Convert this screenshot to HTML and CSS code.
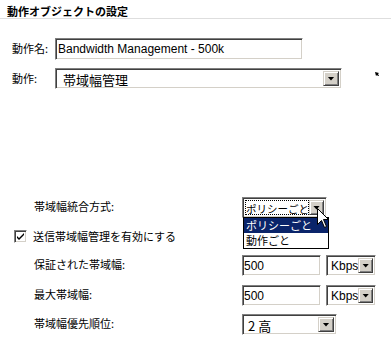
FILE: index.html
```html
<!DOCTYPE html>
<html lang="ja">
<head>
    <meta charset="UTF-8">
    <title>動作オブジェクトの設定</title>
    <link rel="stylesheet" href="styles.css">
</head>
<body>
    <h1 class="title">動作オブジェクトの設定</h1>

    <div class="general">
        <label class="lbl" for="actName">動作名:</label>
        <input type="text" id="actName" class="field name-field" value="Bandwidth Management - 500k">
        <span></span>

        <span class="lbl">動作:</span>
        <div class="combo action-combo">
            <span class="combo-text">帯域幅管理</span>
            <span class="drop"></span>
        </div>
        <svg class="mini-pointer" width="5" height="5" viewBox="0 0 5 5" aria-hidden="true">
            <path d="M0 0 L4 1 L3 2 L4 4 L3 4 L2 3 L1 4 Z" fill="#000"/>
        </svg>
    </div>

    <div class="bw">
        <div class="bw-row">
            <span class="bw-lbl">帯域幅統合方式:</span>
            <div class="combo mode-combo">
                <span class="combo-text focus-text">ポリシーごと</span>
                <span class="drop"></span>
                <ul class="combo-list">
                    <li class="selected">ポリシーごと</li>
                    <li>動作ごと</li>
                </ul>
                <!-- mouse cursor hovering over the drop button -->
                <svg class="cursor" width="12" height="20" viewBox="0 0 12 20" aria-hidden="true">
                    <path d="M0.5 0.5 L0.5 16.5 L4.5 12.5 L7.5 19.5 L9.5 18.5 L6.5 11.5 L11.5 11.5 Z" fill="#fff" stroke="#000" stroke-width="1"/>
                </svg>
            </div>
        </div>

        <div class="check-row">
            <span class="checkbox">
                <svg width="9" height="9" viewBox="0 0 9 9" aria-hidden="true">
                    <path d="M1 4 L3 6 L8 1 L8 3 L3 8 L1 6 Z" fill="#000"/>
                </svg>
            </span>
            <span class="check-lbl">送信帯域幅管理を有効にする</span>
        </div>

        <div class="bw-row">
            <span class="bw-lbl">保証された帯域幅:</span>
            <input type="text" class="field num-field" value="500">
            <div class="combo unit-combo">
                <span class="combo-text">Kbps</span>
                <span class="drop"></span>
            </div>
        </div>

        <div class="bw-row gap9">
            <span class="bw-lbl">最大帯域幅:</span>
            <input type="text" class="field num-field" value="500">
            <div class="combo unit-combo">
                <span class="combo-text">Kbps</span>
                <span class="drop"></span>
            </div>
        </div>

        <div class="bw-row gap8">
            <span class="bw-lbl">帯域幅優先順位:</span>
            <div class="combo prio-combo">
                <span class="combo-text">2 高</span>
                <span class="drop"></span>
            </div>
        </div>
    </div>
</body>
</html>
```

FILE: styles.css
```css
body {
    margin: 0;
    width: 391px;
    height: 344px;
    overflow: hidden;
    background: #ffffff;
    color: #000000;
    font-family: "Noto Sans CJK JP", "Liberation Sans", sans-serif;
    font-size: 11px;
}

.title {
    margin: 0;
    padding: 4px 7px 0;
    height: 14px;
    line-height: 14px;
    font-size: 11px;
    font-weight: bold;
    border-bottom: 1px solid #dedede;
}

/* classic sunken control border */
.field, .combo, .checkbox {
    box-sizing: border-box;
    border: 1px solid;
    border-color: #808080 #ffffff #ffffff #808080;
    box-shadow: inset 1px 1px 0 #404040, inset -1px -1px 0 #d4d0c8;
    background: #ffffff;
}

.field {
    margin: 0;
    padding: 0 2px;
    font-family: "Liberation Sans", Arial, sans-serif;
    font-size: 12px;
    color: #000000;
    outline: none;
}

/* top block */
.general {
    display: grid;
    grid-template-columns: 43px 287px auto;
    grid-template-rows: 22px 21px;
    row-gap: 8px;
    align-items: center;
    padding: 19px 0 0 12px;
}
.lbl {
    margin-top: -2px;
}
.name-field {
    width: 248px;
    height: 22px;
}
.action-combo {
    width: 287px;
    height: 21px;
}
.action-combo .combo-text {
    padding-left: 5px;
    font-size: 13px;
}
.mini-pointer {
    align-self: start;
    margin: 4px 0 0 33px;
}

/* combo boxes */
.combo {
    position: relative;
    display: flex;
    align-items: center;
    padding: 2px;
}
.combo-text {
    flex: 1;
    align-self: stretch;
    white-space: nowrap;
    padding-left: 2px;
    font-size: 12px;
    line-height: 17px;
}
.drop {
    box-sizing: border-box;
    width: 16px;
    align-self: stretch;
    display: flex;
    align-items: center;
    justify-content: center;
    background: #d4d0c8;
    border: 1px solid;
    border-color: #d4d0c8 #404040 #404040 #d4d0c8;
    box-shadow: inset 1px 1px 0 #ffffff, inset -1px -1px 0 #808080;
}
.drop::after {
    content: "";
    width: 7px;
    height: 4px;
    background: #000000;
    clip-path: polygon(0 0, 100% 0, 50% 100%);
}

/* bandwidth block */
.bw {
    margin-top: 108px;
    padding-left: 34px;
}
.bw-row {
    display: flex;
    align-items: center;
    height: 21px;
}
.gap9 { margin-top: 9px; }
.gap8 { margin-top: 8px; }
.bw-lbl {
    width: 208px;
    margin-top: -3px;
}

.mode-combo {
    width: 85px;
    height: 21px;
}
.focus-text {
    padding-left: 1px;
    font-size: 10.5px;
    outline: 1px dotted #000000;
    outline-offset: -1px;
}
.combo-list {
    position: absolute;
    top: 100%;
    left: 0;
    z-index: 2;
    box-sizing: border-box;
    width: 86px;
    margin: 0;
    padding: 0;
    list-style: none;
    border: 1px solid #000000;
    background: #ffffff;
    font-size: 11px;
}
.combo-list li {
    height: 15px;
    line-height: 15px;
    padding-left: 2px;
    white-space: nowrap;
}
.combo-list .selected {
    background: #0a246a;
    color: #ffffff;
}
.cursor {
    position: absolute;
    left: 74px;
    top: 10px;
    z-index: 3;
}

.check-row {
    display: flex;
    align-items: center;
    gap: 6px;
    height: 37px;
    margin-left: -20px;
}
.checkbox {
    width: 13px;
    height: 13px;
    display: flex;
    align-items: center;
    justify-content: center;
}
.check-lbl {
    margin-top: -1px;
}

.num-field {
    width: 79px;
    height: 21px;
    padding: 0 1px;
}
.unit-combo {
    width: 50px;
    height: 21px;
    margin-left: 5px;
}
.unit-combo .combo-text {
    padding-left: 2px;
    font-family: "Liberation Sans", Arial, sans-serif;
}
.prio-combo {
    width: 95px;
    height: 21px;
}
.prio-combo .combo-text {
    padding-left: 3px;
    font-size: 13px;
}
```
